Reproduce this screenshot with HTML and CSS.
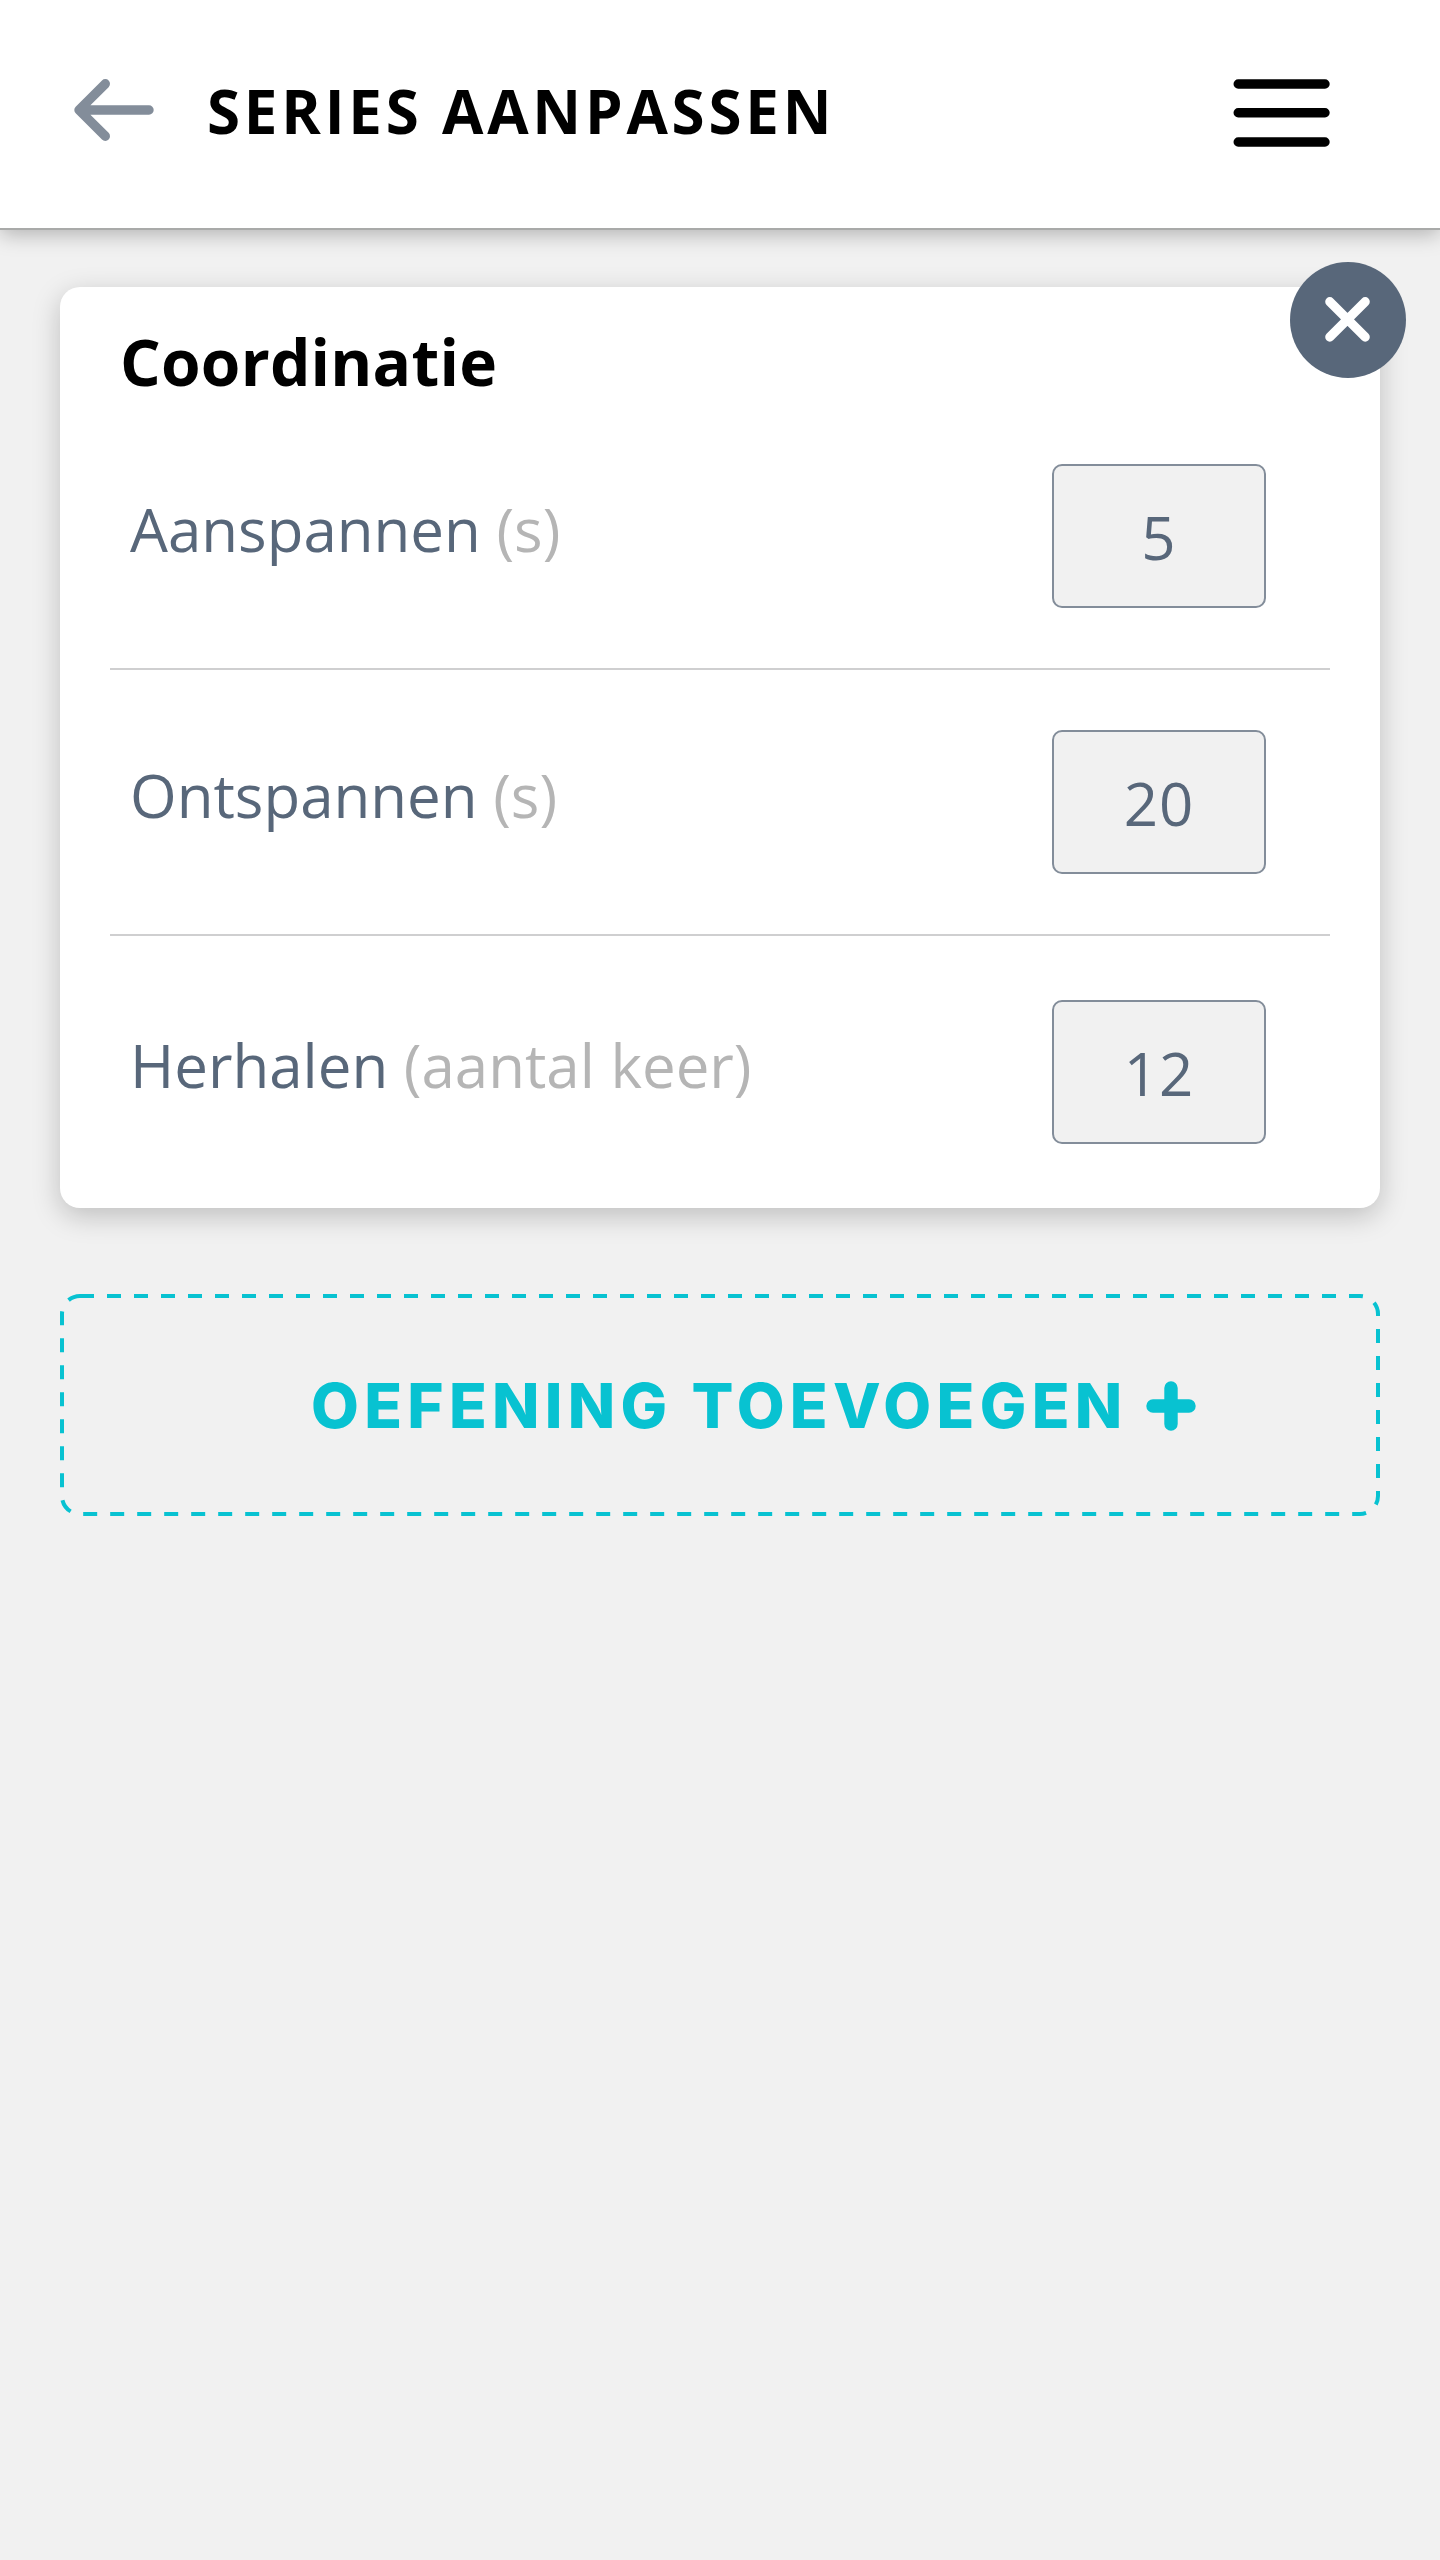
FILE: index.html
```html
<!DOCTYPE html>
<html lang="nl">
<head>
<meta charset="utf-8">
<title>Series aanpassen</title>
<link rel="stylesheet" href="styles.css">
</head>
<body>
<header class="topbar">
  <svg class="back" viewBox="0 0 84 70" width="84" height="70" aria-hidden="true"><path d="M77 35H7M33.3 8.8L7 35L33.3 61.2"/></svg>
  <h1 class="title">SERIES AANPASSEN</h1>
  <svg class="menu" viewBox="0 0 98 70" width="98" height="70" aria-hidden="true"><path d="M5.2 6H92M5.2 34.8H92M5.2 64H92"/></svg>
</header>
<main class="content">
  <section class="card">
    <svg class="close" viewBox="0 0 116 116" width="116" height="116" aria-hidden="true"><circle cx="58" cy="58" r="58"/><path d="M39.8 39.7L75.2 75.1M75.2 39.7L39.8 75.1"/></svg>
    <h2 class="card-title">Coordinatie</h2>
    <div class="rows">
      <div class="row"><span class="label">Aanspannen <span class="unit">(s)</span></span><span class="value">5</span></div>
      <div class="row"><span class="label">Ontspannen <span class="unit">(s)</span></span><span class="value">20</span></div>
      <div class="row"><span class="label">Herhalen <span class="unit">(aantal keer)</span></span><span class="value">12</span></div>
    </div>
  </section>
  <div class="add" role="button">
    <svg class="outline" viewBox="0 0 1320 222" width="1320" height="222" aria-hidden="true"><rect x="2" y="2" width="1316" height="218" rx="18"/></svg>
    <span class="add-text">OEFENING TOEVOEGEN</span>
    <svg class="plus" viewBox="0 0 50 50" width="50" height="50" aria-hidden="true"><path d="M7 25H43M25 7V43"/></svg>
  </div>
</main>
</body>
</html>
```
FILE: styles.css
```css
* { box-sizing: border-box; }
body {
  margin: 0;
  min-height: 2560px;
  background: #f1f1f1;
  font-family: "Open Sans", "Noto Sans", sans-serif;
  overflow-x: hidden;
}
svg { display: block; fill: none; stroke-linecap: round; stroke-linejoin: round; flex: none; }
.topbar {
  display: flex;
  align-items: center;
  height: 230px;
  padding: 0 109px 6px 72px;
  background: #fff;
  border-bottom: 2px solid #a9aaa9;
  box-shadow: 0 4px 20px rgba(0, 0, 0, 0.27);
}
.back { stroke: #838d9a; stroke-width: 9.4; margin-bottom: 2px; }
.title {
  margin: 0 auto 0 51px;
  font-size: 60px;
  line-height: 80px;
  font-weight: 700;
  letter-spacing: 3.8px;
  white-space: nowrap;
  color: #000;
}
.menu { stroke: #000; stroke-width: 9.4; margin-top: 4px; }
.content {
  display: flex;
  flex-direction: column;
  gap: 86px;
  padding: 57px 60px 0;
}
.card {
  position: relative;
  height: 921px;
  padding: 31px 50px 0;
  background: #fff;
  border-radius: 20px;
  box-shadow: 0 8px 28px rgba(0, 0, 0, 0.21);
}
.close { position: absolute; top: -25px; right: -26px; }
.close circle { fill: #58677a; }
.close path { stroke: #fff; stroke-width: 9.2; }
.card-title {
  margin: 0;
  padding: 0 0 58px 10px;
  font-size: 64px;
  line-height: 88px;
  font-weight: 700;
  letter-spacing: 0.2px;
  color: #000;
}
.row {
  display: flex;
  align-items: center;
  justify-content: space-between;
  padding: 60px 64px 60px 20px;
  border-bottom: 2px solid #cfcfd0;
  font-size: 60px;
  line-height: 82px;
  color: #58677a;
}
.row:first-child { padding-top: 0; }
.row:last-child { padding-top: 64px; padding-bottom: 64px; border: 0; }
.label { padding-bottom: 15px; white-space: nowrap; }
.unit { color: #b5b5b5; }
.value {
  display: flex;
  align-items: center;
  justify-content: center;
  width: 214px;
  height: 144px;
  padding-top: 1px;
  background: #f1f1f1;
  border: 2px solid #838d9a;
  border-radius: 10px;
  letter-spacing: 1px;
}
.add {
  position: relative;
  display: flex;
  align-items: center;
  height: 222px;
  padding-left: 251px;
  color: #08c2d1;
}
.outline { position: absolute; inset: 0; stroke: #08c2d1; stroke-width: 4; stroke-dasharray: 14 13; stroke-linecap: butt; }
.add-text {
  width: 835px;
  padding-top: 2px;
  font-family: Inter, sans-serif;
  font-size: 62px;
  line-height: 76px;
  font-weight: 800;
  letter-spacing: 5.3px;
  white-space: nowrap;
}
.plus { stroke: #08c2d1; stroke-width: 13.4; margin-top: 2px; }
```
